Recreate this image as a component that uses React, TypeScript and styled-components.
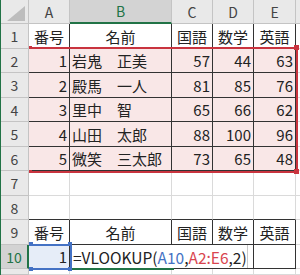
import { Fragment } from "react";
import styled, { createGlobalStyle } from "styled-components";

const GlobalStyle = createGlobalStyle`
  html, body { margin: 0; padding: 0; background: #fff; }
  body { font-family: "Noto Sans CJK JP", "Noto Sans", sans-serif; }
`;

const GREEN = "#217346";
const RED = "#c9343f";
const BLUE = "#4472c4";

const Sheet = styled.div`
  position: relative;
  width: 300px;
  height: 275px;
  overflow: hidden;
  border-left: 1px solid ${GREEN};
  box-sizing: border-box;
  display: grid;
  grid-template-columns: 28px 41px 102px 41px 41px 42px 1fr;
  grid-template-rows: 24px 25px 24px 25px 24px 25px 24px 25px 24px 25px 24px 1fr;
  font-size: 15px;
  color: #222;
`;

const Corner = styled.div`
  background: #e9e9e9;
  border-right: 1px solid #c4c4c4;
  border-bottom: 1px solid #c4c4c4;
  display: flex;
  align-items: flex-end;
  justify-content: flex-end;
  padding: 0 3px 2px 0;
`;

const ColHead = styled.div<{ $active?: boolean }>`
  background: ${(p) => (p.$active ? "#d3d3d3" : "#e9e9e9")};
  border-right: 1px solid #c4c4c4;
  border-bottom: ${(p) => (p.$active ? `2px solid ${GREEN}` : "1px solid #c4c4c4")};
  color: ${(p) => (p.$active ? GREEN : "#444")};
  font-size: 14px;
  display: flex;
  align-items: center;
  justify-content: center;
`;

const RowHead = styled.div<{ $active?: boolean }>`
  background: ${(p) => (p.$active ? "#d3d3d3" : "#e9e9e9")};
  border-right: ${(p) => (p.$active ? `2px solid ${GREEN}` : "1px solid #c4c4c4")};
  border-bottom: 1px solid #c4c4c4;
  color: ${(p) => (p.$active ? GREEN : "#444")};
  font-size: 14px;
  display: flex;
  align-items: center;
  justify-content: center;
`;

const Cell = styled.div<{
  $align?: "left" | "right" | "center";
  $fill?: "pink" | "blue";
  $dr?: boolean;
  $db?: boolean;
}>`
  box-sizing: border-box;
  background: ${(p) => (p.$fill === "pink" ? "#f9e7e7" : p.$fill === "blue" ? "#e6edf8" : "#fff")};
  border-right: 1px solid ${(p) => (p.$dr ? "#333" : "#dadada")};
  border-bottom: 1px solid ${(p) => (p.$db ? "#333" : "#dadada")};
  display: flex;
  align-items: center;
  justify-content: ${(p) => (p.$align === "right" ? "flex-end" : p.$align === "center" ? "center" : "flex-start")};
  padding: 0 2px;
  white-space: nowrap;
  overflow: hidden;
`;

const RangeBox = styled.div<{ $color: string; $left: number; $top: number; $w: number; $h: number }>`
  position: absolute;
  left: ${(p) => p.$left}px;
  top: ${(p) => p.$top}px;
  width: ${(p) => p.$w}px;
  height: ${(p) => p.$h}px;
  border: 2px solid ${(p) => p.$color};
  border-left: none;
  box-sizing: border-box;
  pointer-events: none;
`;

const Handle = styled.div<{ $color: string; $x: number; $y: number; $s?: number }>`
  position: absolute;
  left: ${(p) => p.$x}px;
  top: ${(p) => p.$y}px;
  width: ${(p) => p.$s ?? 5}px;
  height: ${(p) => p.$s ?? 5}px;
  background: ${(p) => p.$color};
`;

const Editor = styled.div`
  position: absolute;
  left: 71px;
  top: 245px;
  width: 176px;
  height: 23px;
  background: #fff;
  border-right: 1px solid #c8c8c8;
  box-sizing: border-box;
  display: flex;
  align-items: center;
  padding-left: 1px;
  font-size: 15.5px;
  white-space: nowrap;
`;

const Ref = styled.span<{ $color: string }>`
  color: ${(p) => p.$color};
`;

const ActiveBox = styled.div`
  position: absolute;
  left: 69px;
  top: 245px;
  width: 104px;
  height: 25px;
  border-left: 2px solid ${GREEN};
  border-bottom: 2px solid ${GREEN};
  box-sizing: border-box;
`;

const heads = ["番号", "名前", "国語", "数学", "英語"];

const rows: [number, string, number, number, number][] = [
  [1, "岩鬼　正美", 57, 44, 63],
  [2, "殿馬　一人", 81, 85, 76],
  [3, "里中　智", 65, 66, 62],
  [4, "山田　太郎", 88, 100, 96],
  [5, "微笑　三太郎", 73, 65, 48],
];

function HeaderRow() {
  return (
    <>
      {heads.map((h) => (
        <Cell key={h} $align="center" $dr $db>
          {h}
        </Cell>
      ))}
      <Cell />
    </>
  );
}

function EmptyRow({ darkBottom }: { darkBottom?: boolean }) {
  return (
    <>
      {[0, 1, 2, 3, 4].map((i) => (
        <Cell key={i} $db={darkBottom} />
      ))}
      <Cell />
    </>
  );
}

export default function App() {
  return (
    <>
      <GlobalStyle />
      <Sheet>
        <Corner>
          <svg width="18" height="15" viewBox="0 0 18 15">
            <polygon points="18,0 18,15 0,15" fill="#bdbdbd" />
          </svg>
        </Corner>
        {["A", "B", "C", "D", "E", ""].map((c, i) => (
          <ColHead key={i} $active={c === "B"}>
            {c}
          </ColHead>
        ))}

        <RowHead>1</RowHead>
        <HeaderRow />

        {rows.map((r) => (
          <Fragment key={r[0]}>
            <RowHead>{r[0] + 1}</RowHead>
            <Cell $align="right" $fill="pink" $dr $db>{r[0]}</Cell>
            <Cell $fill="pink" $dr $db>{r[1]}</Cell>
            <Cell $align="right" $fill="pink" $dr $db>{r[2]}</Cell>
            <Cell $align="right" $fill="pink" $dr $db>{r[3]}</Cell>
            <Cell $align="right" $fill="pink" $dr $db>{r[4]}</Cell>
            <Cell />
          </Fragment>
        ))}

        <RowHead>7</RowHead>
        <EmptyRow />
        <RowHead>8</RowHead>
        <EmptyRow darkBottom />

        <RowHead>9</RowHead>
        <HeaderRow />

        <RowHead $active>10</RowHead>
        <Cell $align="right" $fill="blue" $dr $db>1</Cell>
        <Cell $dr $db />
        <Cell $dr $db />
        <Cell $dr $db />
        <Cell $dr $db />
        <Cell />

        <RowHead />
        <EmptyRow />

        <RangeBox $color={RED} $left={28} $top={47} $w={269} $h={126} />
        <Handle $color={RED} $x={293} $y={45} />
        <Handle $color={RED} $x={293} $y={169} />
        <Handle $color={RED} $x={28} $y={46} $s={3} />
        <Handle $color={RED} $x={28} $y={170} $s={3} />

        <Editor>
          =VLOOKUP(<Ref $color={BLUE}>A10</Ref>,<Ref $color="#d9454f">A2:E6</Ref>,2)
        </Editor>
        <ActiveBox />

        <RangeBox $color={BLUE} $left={28} $top={244} $w={43} $h={26} />
        <Handle $color={BLUE} $x={28} $y={242} $s={4} />
        <Handle $color={BLUE} $x={67} $y={242} $s={4} />
        <Handle $color={BLUE} $x={28} $y={267} $s={4} />
        <Handle $color={BLUE} $x={67} $y={267} $s={4} />
      </Sheet>
    </>
  );
}
